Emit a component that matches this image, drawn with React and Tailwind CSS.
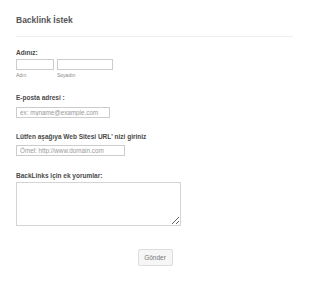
import React from "react";

export default function App() {
  const font = { fontFamily: '"Liberation Sans", Arial, sans-serif' };
  return (
    <div className="w-[310px] h-[282px] bg-white overflow-hidden" style={font}>
      <div className="pl-[16px] pr-[17px] pt-[15px] flex flex-col">
        <h2 className="text-[8.5px] leading-[11px] font-bold text-[#555]">Backlink İstek</h2>
        <div className="mt-[10px] h-px bg-[#eeeeee]" />

        <label className="mt-[11px] text-[6.5px] leading-[9px] font-bold text-[#4a4a4a]">Adınız:</label>
        <div className="mt-[2px] flex gap-[3px]">
          <div className="flex flex-col">
            <input className="w-[38px] h-[11px] border border-[#ccc] bg-white outline-none" />
            <span className="mt-[2px] text-[5px] leading-[6px] text-[#888]">Adın</span>
          </div>
          <div className="flex flex-col">
            <input className="w-[56px] h-[11px] border border-[#ccc] bg-white outline-none" />
            <span className="mt-[2px] text-[5px] leading-[6px] text-[#888]">Soyadın</span>
          </div>
        </div>

        <label className="mt-[15px] text-[6.5px] leading-[9px] font-bold text-[#4a4a4a]">E-posta adresi :</label>
        <input
          placeholder="ex: myname@example.com"
          className="mt-[5px] w-[94px] h-[11px] border border-[#ccc] bg-white px-[3px] text-[6.3px] leading-[9px] text-[#555] placeholder:text-[#999] outline-none"
        />

        <label className="mt-[14px] text-[6.5px] leading-[9px] font-bold text-[#4a4a4a]">Lütfen aşağıya Web Sitesi URL' nizi giriniz</label>
        <input
          placeholder="Ömel: http://www.domain.com"
          className="mt-[4px] w-[109px] h-[11px] border border-[#ccc] bg-white px-[3px] text-[6.3px] leading-[9px] text-[#555] placeholder:text-[#999] outline-none"
        />

        <label className="mt-[15px] text-[6.5px] leading-[9px] font-bold text-[#4a4a4a]">BackLinks için ek yorumlar:</label>
        <textarea className="mt-[2px] w-[165px] h-[44px] border border-[#d4d4d4] bg-white outline-none resize" />
      </div>
      <div className="mt-[23px] flex justify-center">
        <button className="w-[35px] h-[17px] rounded-[2px] border border-[#ddd] bg-[#f6f6f6] text-[6.5px] text-[#777]">Gönder</button>
      </div>
    </div>
  );
}
